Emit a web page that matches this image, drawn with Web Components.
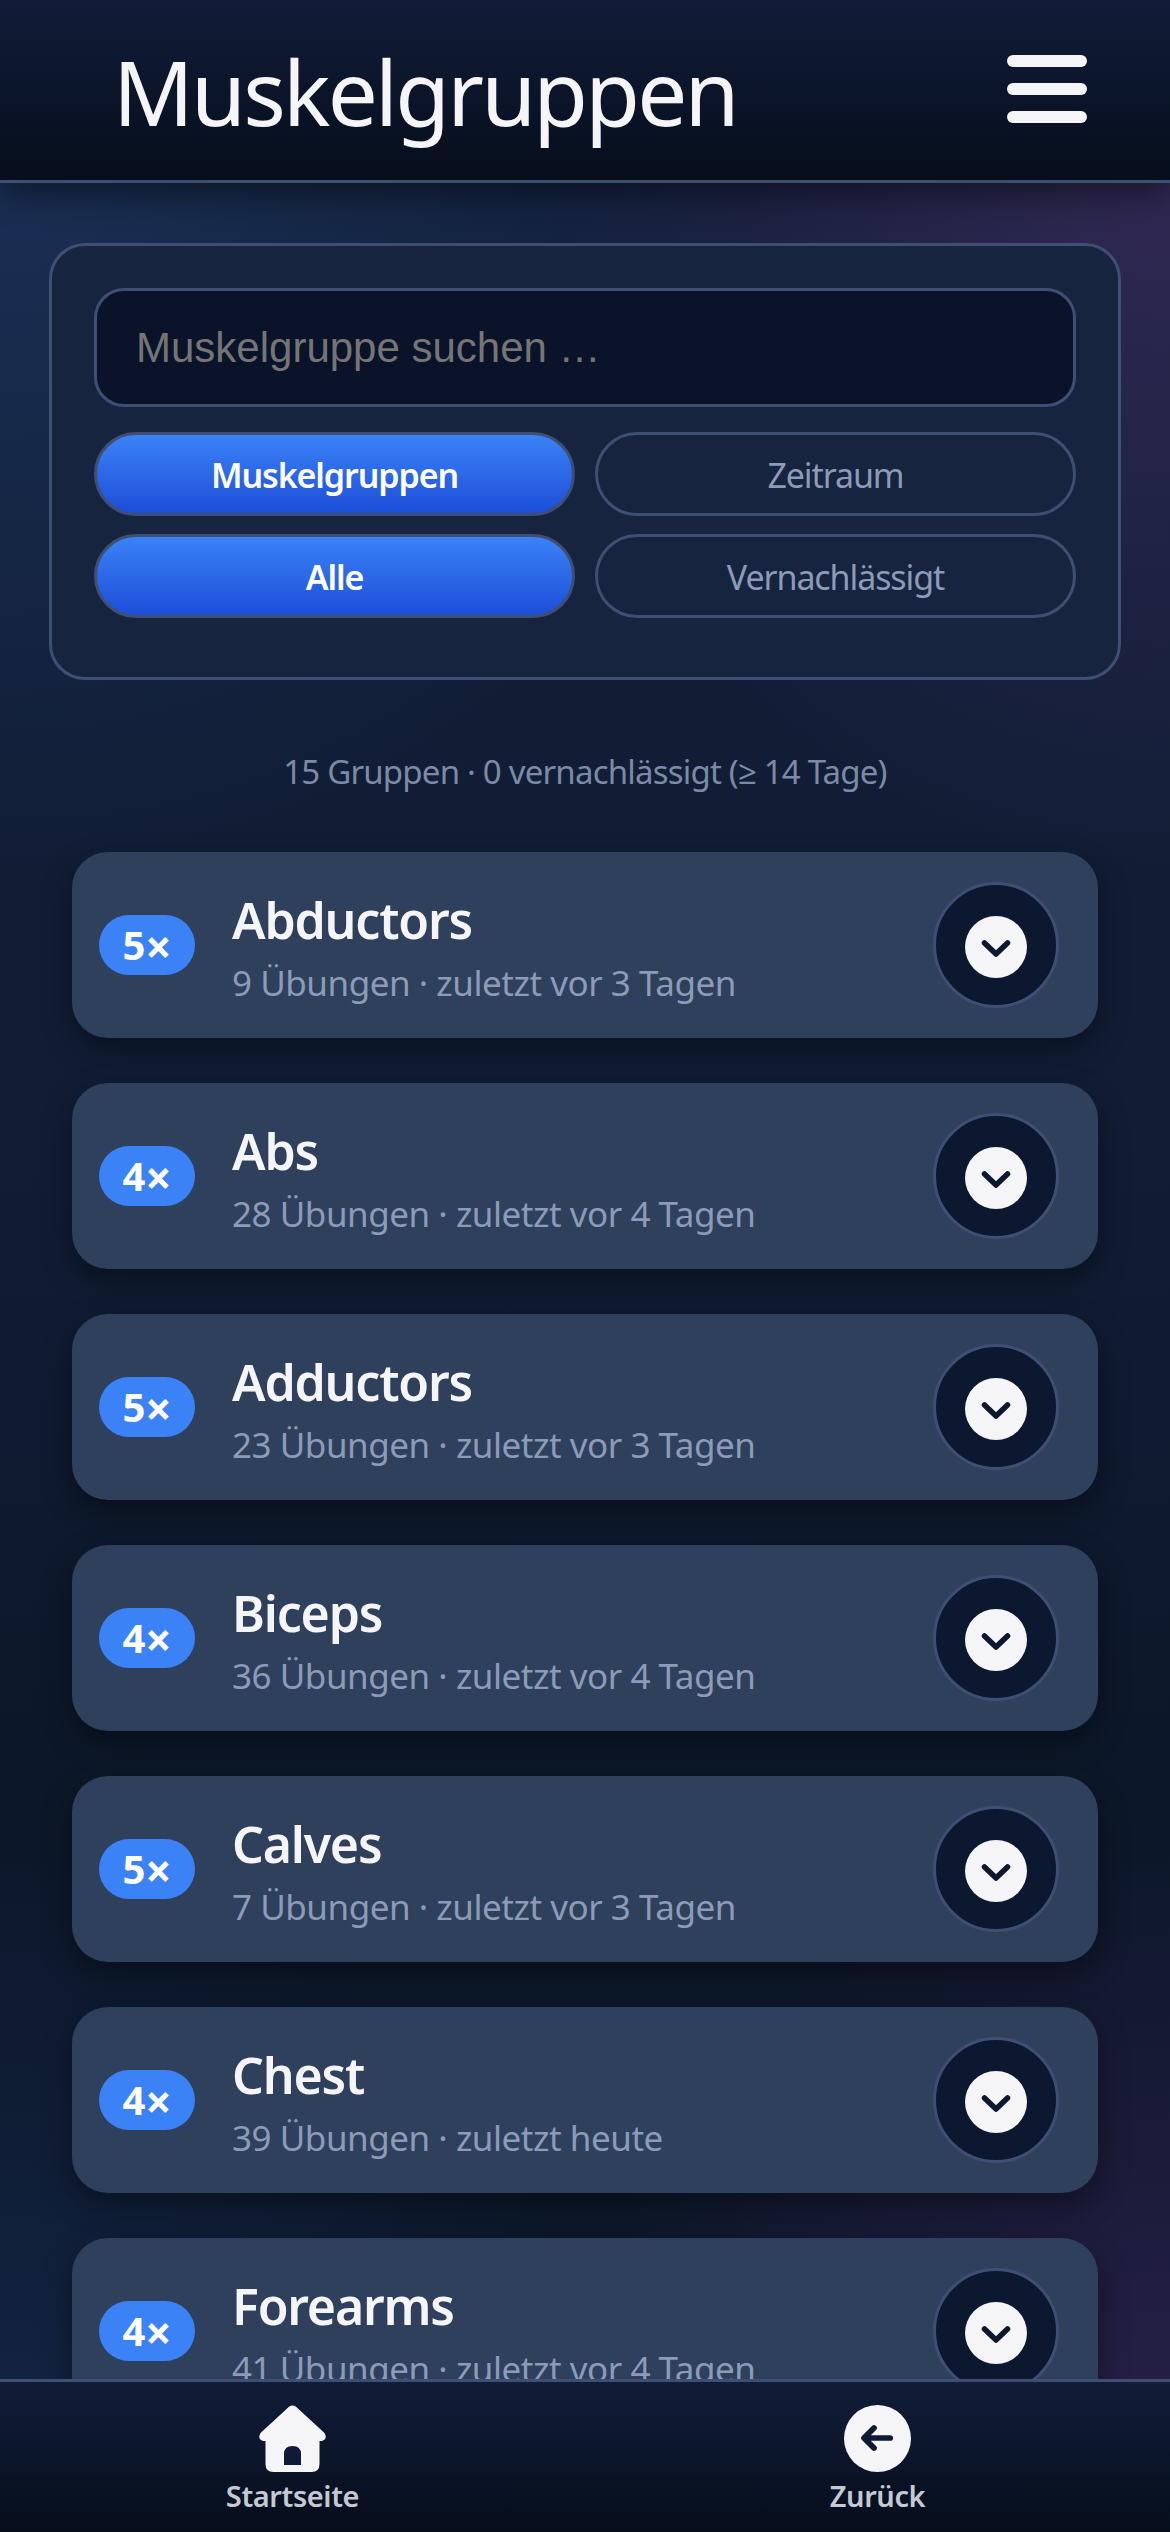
<!DOCTYPE html>
<html lang="de">
<head>
<meta charset="utf-8">
<title>Muskelgruppen</title>
<style>
  html, body { margin: 0; padding: 0; height: 100%; background: #0e1a30; }
  body { font-family: "Noto Sans", "Open Sans", sans-serif; color: #f5f5f7; }
</style>
</head>
<body>
<app-shell>
  <top-bar slot="top" heading="Muskelgruppen"></top-bar>
  <filter-panel></filter-panel>
  <p-stats>15 Gruppen · 0 vernachlässigt (≥ 14 Tage)</p-stats>
  <muscle-card count="5" name="Abductors" meta="9 Übungen · zuletzt vor 3 Tagen"></muscle-card>
  <muscle-card count="4" name="Abs" meta="28 Übungen · zuletzt vor 4 Tagen"></muscle-card>
  <muscle-card count="5" name="Adductors" meta="23 Übungen · zuletzt vor 3 Tagen"></muscle-card>
  <muscle-card count="4" name="Biceps" meta="36 Übungen · zuletzt vor 4 Tagen"></muscle-card>
  <muscle-card count="5" name="Calves" meta="7 Übungen · zuletzt vor 3 Tagen"></muscle-card>
  <muscle-card count="4" name="Chest" meta="39 Übungen · zuletzt heute"></muscle-card>
  <muscle-card count="4" name="Forearms" meta="41 Übungen · zuletzt vor 4 Tagen"></muscle-card>
  <bottom-nav slot="bottom"></bottom-nav>
</app-shell>

<script>
class AppShell extends HTMLElement {
    constructor() {
        super();
        this.attachShadow({mode:'open'});
        this.shadowRoot.innerHTML = `
            <style>
                :host {
                    display: flex;
                    flex-direction: column;
                    width: 1170px;
                    height: 2532px;
                    overflow: hidden;
                    background:
                        radial-gradient(ellipse 760px 720px at 0 150px, rgba(32,62,110,0.55), transparent 100%),
                        radial-gradient(ellipse 640px 720px at 1170px 150px, rgba(66,46,100,0.65), transparent 100%),
                        radial-gradient(ellipse 620px 700px at 0 2532px, rgba(28,56,108,0.42), transparent 100%),
                        radial-gradient(ellipse 620px 700px at 1170px 2532px, rgba(64,38,100,0.58), transparent 100%),
                        linear-gradient(180deg, #111e37 0%, #111d35 45%, #0c1729 70%, #0d182b 100%);
                }
                main {
                    flex: 1;
                    min-height: 0;
                    overflow: hidden;
                    padding: 60px 49px 0;
                }
            </style>
            <slot name="top"></slot>
            <main><slot></slot></main>
            <slot name="bottom"></slot>
        `;
    }
}

class TopBar extends HTMLElement {
    constructor() {
        super();
        this.attachShadow({mode:'open'});
        this.shadowRoot.innerHTML = `
            <style>
                :host {
                    display: flex;
                    align-items: center;
                    justify-content: space-between;
                    box-sizing: border-box;
                    flex: none;
                    height: 183px;
                    padding: 0 83px 2px 113px;
                    background: linear-gradient(180deg, #111c38, #060e1c);
                    border-bottom: 3px solid #3f4f73;
                    box-shadow: 0 12px 30px rgba(0,0,0,0.45);
                    position: relative;
                    z-index: 2;
                }
                h1 {
                    margin: 6px 0 0;
                    font-size: 89px;
                    font-weight: 400;
                    line-height: 1.2;
                    letter-spacing: -2.8px;
                    color: #f5f5f7;
                }
                #menu {
                    display: flex;
                    flex-direction: column;
                    gap: 16px;
                    width: 80px;
                }
                #menu span {
                    height: 12px;
                    border-radius: 6px;
                    background: #f5f5f7;
                }
            </style>
            <h1></h1>
            <div id="menu"><span></span><span></span><span></span></div>
        `;
        this.shadowRoot.querySelector('h1').textContent = this.getAttribute('heading');
    }
}

class FilterPill extends HTMLElement {
    constructor() {
        super();
        this.attachShadow({mode:'open'});
        this.shadowRoot.innerHTML = `
            <style>
                :host {
                    display: flex;
                    align-items: center;
                    justify-content: center;
                    box-sizing: border-box;
                    height: 84px;
                    padding-top: 2px;
                    border-radius: 42px;
                    border: 3px solid #3f4f73;
                    font-size: 34px;
                    letter-spacing: -1.1px;
                    color: #8b9bb8;
                }
                :host([active]) {
                    background: linear-gradient(180deg, #3b82f6, #1d4ed8);
                    color: #fff;
                    font-weight: 600;
                }
            </style>
            <slot></slot>
        `;
    }
}

class FilterPanel extends HTMLElement {
    constructor() {
        super();
        this.attachShadow({mode:'open'});
        this.shadowRoot.innerHTML = `
            <style>
                :host {
                    display: block;
                    box-sizing: border-box;
                    height: 437px;
                    padding: 42px;
                    background: #16243f;
                    border: 3px solid #3f4f73;
                    border-radius: 36px;
                }
                #search {
                    box-sizing: border-box;
                    height: 119px;
                    padding: 0 39px;
                    display: flex;
                    align-items: center;
                    background: #0a1329;
                    border: 3px solid #3f4f73;
                    border-radius: 30px;
                    font-family: "Liberation Sans", Arial, sans-serif;
                    font-size: 42px;
                    color: #757575;
                    margin-bottom: 25px;
                }
                #pills {
                    display: grid;
                    grid-template-columns: 1fr 1fr;
                    gap: 18px 20px;
                }
            </style>
            <div id="search">Muskelgruppe suchen …</div>
            <div id="pills">
                <filter-pill active>Muskelgruppen</filter-pill>
                <filter-pill>Zeitraum</filter-pill>
                <filter-pill active>Alle</filter-pill>
                <filter-pill>Vernachlässigt</filter-pill>
            </div>
        `;
    }
}

class PStats extends HTMLElement {
    constructor() {
        super();
        this.attachShadow({mode:'open'});
        this.shadowRoot.innerHTML = `
            <style>
                :host {
                    display: block;
                    margin: 69px 0 57px;
                    text-align: center;
                    font-size: 33px;
                    letter-spacing: -0.8px;
                    line-height: 46px;
                    color: #7c8aa6;
                }
            </style>
            <slot></slot>
        `;
    }
}

class MuscleCard extends HTMLElement {
    constructor() {
        super();
        this.attachShadow({mode:'open'});
        this.shadowRoot.innerHTML = `
            <style>
                :host {
                    display: flex;
                    align-items: center;
                    box-sizing: border-box;
                    height: 186px;
                    margin: 0 23px 45px;
                    padding: 0 39px 0 27px;
                    background: #2e405c;
                    border-radius: 36px;
                    box-shadow: 0 12px 30px rgba(0,0,0,0.4);
                }
                #badge {
                    flex: none;
                    width: 96px;
                    height: 60px;
                    border-radius: 30px;
                    background: #3b82f6;
                    color: #fff;
                    font-size: 40px;
                    font-weight: 700;
                    line-height: 60px;
                    text-align: center;
                }
                #badge span {
                    font-size: 46px;
                    line-height: 0;
                    vertical-align: -4px;
                }
                #text {
                    flex: 1;
                    min-width: 0;
                    margin-left: 37px;
                    padding-top: 8px;
                }
                #name {
                    font-size: 50px;
                    font-weight: 600;
                    letter-spacing: -1.2px;
                    line-height: 68px;
                    color: #f5f5f7;
                }
                #meta {
                    font-size: 35px;
                    letter-spacing: -0.47px;
                    line-height: 58px;
                    color: #8b9bb8;
                }
                #toggle {
                    flex: none;
                    box-sizing: border-box;
                    width: 126px;
                    height: 126px;
                    border-radius: 50%;
                    background: #0b1830;
                    border: 3px solid #3f4f73;
                    display: flex;
                    align-items: center;
                    justify-content: center;
                }
                svg { display: block; margin-top: 3px; }
            </style>
            <div id="badge"></div>
            <div id="text">
                <div id="name"></div>
                <div id="meta"></div>
            </div>
            <div id="toggle">
                <svg width="62" height="62" viewBox="0 0 62 62">
                    <circle cx="31" cy="31" r="31" fill="#f5f5f7"/>
                    <path d="M19.5 27 L31 38 L42.5 27" fill="none" stroke="#0b1830" stroke-width="5.5" stroke-linecap="round" stroke-linejoin="round"/>
                </svg>
            </div>
        `;
        const badge = this.shadowRoot.querySelector('#badge');
        badge.textContent = this.getAttribute('count');
        const times = document.createElement('span');
        times.textContent = '×';
        badge.appendChild(times);
        this.shadowRoot.querySelector('#name').textContent = this.getAttribute('name');
        this.shadowRoot.querySelector('#meta').textContent = this.getAttribute('meta');
    }
}

class BottomNav extends HTMLElement {
    constructor() {
        super();
        this.attachShadow({mode:'open'});
        this.shadowRoot.innerHTML = `
            <style>
                :host {
                    display: grid;
                    grid-template-columns: 1fr 1fr;
                    box-sizing: border-box;
                    flex: none;
                    height: 153px;
                    padding-top: 23px;
                    background: linear-gradient(180deg, #111c38, #060e1c);
                    border-top: 3px solid #3f4f73;
                    position: relative;
                    z-index: 2;
                }
                a {
                    display: flex;
                    flex-direction: column;
                    align-items: center;
                    font-size: 29px;
                    font-weight: 600;
                    letter-spacing: -0.4px;
                    line-height: 40px;
                    color: #c5c9d3;
                }
                svg { display: block; margin-bottom: 4px; overflow: visible; }
            </style>
            <a>
                <svg width="67" height="67" viewBox="0 0 67 67">
                    <path d="M30 1.8 Q33.5 -0.8 37 1.8 L65.5 28 Q69 34 63 36 L60.5 36 L60.5 59 Q60.5 67 52.5 67 L14.5 67 Q6.5 67 6.5 59 L6.5 36 L4 36 Q-2 34 1.5 28 Z" fill="#f5f5f7"/>
                    <path d="M25 60 L25 49 Q25 41 33.5 41 Q42 41 42 49 L42 60 Z" fill="#0f1b36"/>
                </svg>
                Startseite
            </a>
            <a>
                <svg width="67" height="67" viewBox="0 0 67 67">
                    <circle cx="33.5" cy="33.5" r="33.5" fill="#f5f5f7"/>
                    <path d="M46.2 33 H20.5 M30 23 L20 33 L30 43" fill="none" stroke="#0f1b36" stroke-width="5.7" stroke-linecap="round" stroke-linejoin="round"/>
                </svg>
                Zurück
            </a>
        `;
    }
}

customElements.define('app-shell', AppShell);
customElements.define('top-bar', TopBar);
customElements.define('filter-pill', FilterPill);
customElements.define('filter-panel', FilterPanel);
customElements.define('p-stats', PStats);
customElements.define('muscle-card', MuscleCard);
customElements.define('bottom-nav', BottomNav);
</script>
</body>
</html>
